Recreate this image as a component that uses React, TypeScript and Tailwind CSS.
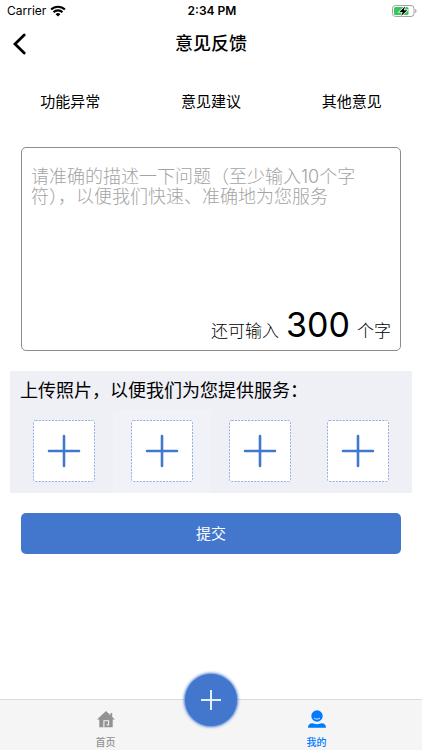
import { useState } from "react";

const MAX_LENGTH = 300;

const categories = ["功能异常", "意见建议", "其他意见"];

const photoSlots = [
  { id: 1, label: "上传照片 1", className: "" },
  { id: 2, label: "上传照片 2", className: "bg-[#f1f1f8]" },
  { id: 3, label: "上传照片 3", className: "" },
  { id: 4, label: "上传照片 4", className: "" },
];

function WifiIcon() {
  return (
    <svg viewBox="0 0 16 12" className="h-3 w-4" aria-hidden="true">
      <g fill="none" stroke="#000" strokeWidth="2.1">
        <path d="M1.1 4.6a9.8 9.8 0 0 1 13.8 0" />
        <path d="M3.5 7.2a6.4 6.4 0 0 1 9 0" />
      </g>
      <path d="M8 11.6 5.6 9.2a3.4 3.4 0 0 1 4.8 0z" fill="#000" />
    </svg>
  );
}

function BatteryIcon() {
  return (
    <svg viewBox="0 0 25 12" className="h-3 w-[25px]" aria-hidden="true">
      <rect x="0.5" y="0.5" width="21.5" height="11" rx="3" fill="none" stroke="#a3a3a3" />
      <path d="M23.2 4v4c.8-.3 1.3-1.1 1.3-2s-.5-1.7-1.3-2z" fill="#a3a3a3" />
      <rect x="2" y="2" width="14.5" height="8" rx="1.5" fill="#35c759" />
      <path
        d="M13.3 1.3 7.3 6.9h3.4l-1.5 4 6.1-5.6h-3.5z"
        fill="#000"
        stroke="#fff"
        strokeWidth="1.4"
        paintOrder="stroke"
      />
    </svg>
  );
}

function StatusBar() {
  return (
    <div className="grid h-[22px] grid-cols-3 items-center pr-[5px] pl-[7px] text-xs">
      <div className="flex items-center gap-1">
        <span>Carrier</span>
        <WifiIcon />
      </div>
      <span className="text-center font-semibold">2:34 PM</span>
      <div className="flex justify-end">
        <BatteryIcon />
      </div>
    </div>
  );
}

function Header() {
  return (
    <header className="relative flex h-11 items-center justify-center">
      <button type="button" aria-label="返回" className="absolute inset-y-0 left-0 w-10 pl-3">
        <svg viewBox="0 0 14 22" className="h-[22px] w-3.5" fill="none" aria-hidden="true">
          <path d="M12.2 2 3 11l9.2 9" stroke="#000" strokeWidth="2.8" strokeLinecap="round" />
        </svg>
      </button>
      <h1 className="text-lg font-medium">意见反馈</h1>
    </header>
  );
}

function PhotoSlot({ label, className }: { label: string; className: string }) {
  return (
    <div className={`flex justify-center pt-[10px] pb-[11px] ${className}`}>
      <button type="button" aria-label={label}>
        <svg viewBox="0 0 62 62" className="size-[62px]" fill="none" aria-hidden="true">
          <rect x="0.5" y="0.5" width="61" height="61" rx="2" fill="#fff" stroke="#8fafe4" strokeDasharray="2 1.3" />
          <path d="M31 16v30M16 31h30" stroke="#4277cd" strokeWidth="2.6" strokeLinecap="round" />
        </svg>
      </button>
    </div>
  );
}

function TabBar() {
  return (
    <nav className="relative grid h-[51px] grid-cols-2 border-t border-[#dadcde] bg-[#f6f5f6] text-[10px] leading-3 font-medium">
      <a href="#home" className="flex flex-col items-center gap-2 pt-[10px] text-[#929292]">
        <svg viewBox="0 0 18 18" className="size-[18px]" aria-hidden="true">
          <path d="M9 1 0 9.6h2.3v7.6h13.4V9.6H18l-2.8-2.7V3h-1.7v2.3z" fill="currentColor" />
          <path d="M6.9 17.2v-6.500h4.700v4.200H9.700" fill="none" stroke="#f6f5f6" strokeWidth="1.100" />
        </svg>
        首页
      </a>
      <a href="#mine" aria-current="page" className="flex flex-col items-center gap-2 pt-[10px] text-[#007aff]">
        <svg viewBox="0 0 18 18" className="size-[18px]" aria-hidden="true">
          <circle cx="9" cy="6" r="5.700" fill="currentColor" />
          <path d="M6.3 8.3c1.500 1.200 3.900 1.200 5.400 0" fill="none" stroke="#f6f5f6" strokeWidth="0.900" strokeLinecap="round" />
          <path d="M0 17.800c0-3 1.600-4.600 4.300-4.600 1.500 0 2.700 1 4.700 1s3.200-1 4.700-1c2.700 0 4.300 1.600 4.300 4.600z" fill="currentColor" />
        </svg>
        我的
      </a>
      <button
        type="button"
        aria-label="新建"
        className="absolute -top-[26px] left-1/2 flex size-[52px] -translate-x-1/2 items-center justify-center rounded-full bg-[#4277cd] shadow-[0_0_3px_1px_#4277cd]"
      >
        <svg viewBox="0 0 20 20" className="size-5" aria-hidden="true">
          <path d="M10 0v20M0 10h20" stroke="#e6effc" strokeWidth="2" />
        </svg>
      </button>
    </nav>
  );
}

export default function App() {
  const [text, setText] = useState("");

  return (
    <div className="flex min-h-screen flex-col bg-white font-[Inter,'Noto_Sans_CJK_SC',sans-serif] text-black" lang="zh-CN">
      <StatusBar />
      <Header />

      <main className="flex-1 pb-10">
        <div className="grid h-[72px] grid-cols-3 text-[15px]">
          {categories.map((name) => (
            <button key={name} type="button">
              {name}
            </button>
          ))}
        </div>

        <div className="mx-[21px] mt-[9px] flex flex-col rounded-[5px] border border-[#8c8c8c] px-[9px] pt-[19px] pb-1">
          <textarea
            aria-label="问题描述"
            value={text}
            maxLength={MAX_LENGTH}
            onChange={(e) => setText(e.target.value)}
            placeholder="请准确的描述一下问题（至少输入10个字符），以便我们快速、准确地为您服务"
            className="block h-[143px] w-full resize-none pr-8 text-lg leading-5 font-light outline-none placeholder:text-[#a3a3a3]"
          />
          <p className="flex items-baseline justify-end gap-[7px] text-[17px] leading-[29px] font-light">
            <span>还可输入</span>
            <span className="text-[34px] font-normal">{MAX_LENGTH - text.length}</span>
            <span>个字</span>
          </p>
        </div>

        <section className="mx-[10px] mt-5 bg-[#efeff6]">
          <h2 className="h-[39px] px-[10px] text-lg leading-10">上传照片，以便我们为您提供服务：</h2>
          <div className="grid grid-cols-4 px-[5px]">
            {photoSlots.map((slot) => (
              <PhotoSlot key={slot.id} label={slot.label} className={slot.className} />
            ))}
          </div>
        </section>

        <div className="mx-[21px] mt-5">
          <button type="button" className="h-[41px] w-full rounded-[5px] bg-[#4277cd] pt-0.5 text-[15px] text-white">
            提交
          </button>
        </div>
      </main>

      <TabBar />
    </div>
  );
}
